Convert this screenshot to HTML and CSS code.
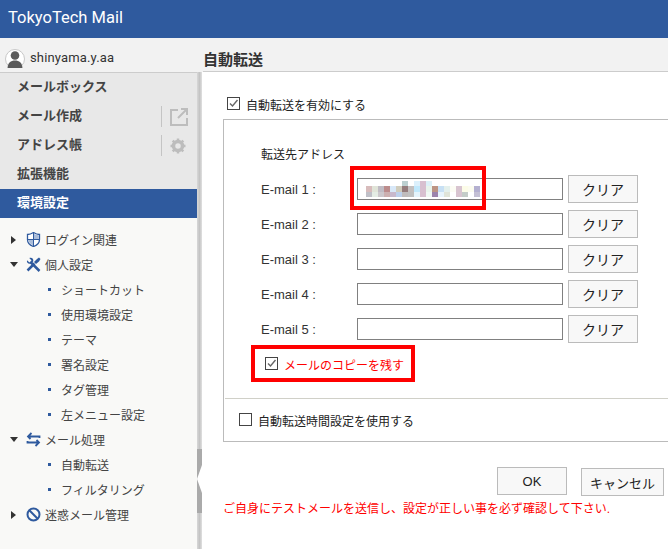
FILE: index.html
```html
<!DOCTYPE html>
<html lang="ja">
<head>
<meta charset="utf-8">
<title>TokyoTech Mail</title>
<link rel="stylesheet" href="styles.css">
</head>
<body>
<header class="header">TokyoTech Mail</header>
<div class="subbar">
  <div class="user">
    <svg class="avatar" width="20" height="20" viewBox="0 0 20 20"><defs><clipPath id="av"><rect x="0" y="0" width="20" height="19"/></clipPath></defs><g clip-path="url(#av)"><circle cx="10" cy="10" r="9.500" fill="#fff" stroke="#c8c8c8"/><circle cx="10" cy="6.500" r="4.300" fill="#5a5a5a"/><path d="M2.500 20c0-6 3-8.500 7.500-8.500s7.500 2.500 7.500 8.500z" fill="#5a5a5a"/></g></svg>
    <span>shinyama.y.aa</span>
  </div>
  <h1 class="title">自動転送</h1>
</div>
<div class="main">
  <aside class="sidebar">
    <nav class="menu">
      <div class="menu-row">メールボックス</div>
      <div class="menu-row"><span>メール作成</span>
        <span class="menu-action"><svg width="18" height="18" viewBox="0 0 18 18" fill="none" stroke="#bdbdbd" stroke-width="2"><path d="M8 2H1v15h16v-7"/><path d="M8 10l8-8M11 1h6v6" /></svg></span>
      </div>
      <div class="menu-row"><span>アドレス帳</span>
        <span class="menu-action"><svg width="16" height="16" viewBox="0 0 16 16"><circle cx="8" cy="8" r="4.500" fill="none" stroke="#bdbdbd" stroke-width="3.500"/><path d="M8 .5v3M8 12.500v3M.5 8h3M12.500 8h3M2.700 2.700l2 2M11.300 11.300l2 2M13.300 2.700l-2 2M4.700 11.300l-2 2" stroke="#bdbdbd" stroke-width="2.500"/></svg></span>
      </div>
      <div class="menu-row">拡張機能</div>
      <div class="menu-row menu-row-active">環境設定</div>
    </nav>
    <ul class="tree">
      <li class="tree-row"><span class="tw tw-closed"></span><svg class="tree-icon" width="15" height="15" viewBox="0 0 15 15"><path d="M1.500 2.500c2 0 4-.7 6-2 2 1.300 4 2 6 2v5c0 3.500-2.500 5.800-6 7-3.500-1.200-6-3.500-6-7z" fill="#fff" stroke="#2f5a9e" stroke-width="1.300"/><path d="M2.200 7.500h5.300v6c-3-1-5.100-3-5.300-6zM7.500 1.500c1.700 1 3.300 1.500 5.300 1.700v4.300H7.500z" fill="#a9bcd9"/><path d="M7.500 1v13M1.500 7.500h12" stroke="#2f5a9e" stroke-width="1"/></svg>ログイン関連</li>
      <li class="tree-row"><span class="tw tw-open"></span><svg class="tree-icon" width="15" height="15" viewBox="0 0 15 15"><path d="M13.500 14L4.500 5" stroke="#2f5a9e" stroke-width="2.500"/><path d="M1 3.200L3.500 5.500 5.500 3.500 3.300 1C5.500 0 8 1.500 7.200 4.500L5 6.500C2.500 7.500.3 5.500 1 3.200z" fill="#2f5a9e"/><path d="M1.500 13.500L8.500 6.500" stroke="#2f5a9e" stroke-width="2.500"/><path d="M8 5l3-3 2-1.500 1.500 1.500L13 4.500l-3 2.500z" fill="#2f5a9e"/></svg>個人設定</li>
      <li class="tree-row sub"><span class="dot"></span>ショートカット</li>
      <li class="tree-row sub"><span class="dot"></span>使用環境設定</li>
      <li class="tree-row sub"><span class="dot"></span>テーマ</li>
      <li class="tree-row sub"><span class="dot"></span>署名設定</li>
      <li class="tree-row sub"><span class="dot"></span>タグ管理</li>
      <li class="tree-row sub"><span class="dot"></span>左メニュー設定</li>
      <li class="tree-row"><span class="tw tw-open"></span><svg class="tree-icon" width="15" height="15" viewBox="0 0 15 15" fill="none" stroke="#2f5a9e" stroke-width="1.800"><path d="M13.500 6V4.500H2.500M5.500 1L2 4.500 4.500 7"/><path d="M1.500 9v1.500h11M9.500 14l3.500-3.500L10.500 8"/></svg>メール処理</li>
      <li class="tree-row sub"><span class="dot"></span>自動転送</li>
      <li class="tree-row sub"><span class="dot"></span>フィルタリング</li>
      <li class="tree-row"><span class="tw tw-closed"></span><svg class="tree-icon" width="15" height="15" viewBox="0 0 15 15" fill="none" stroke="#2f5a9e" stroke-width="2"><circle cx="7.500" cy="7.500" r="6"/><path d="M3.300 3.300l8.400 8.400"/></svg>迷惑メール管理</li>
    </ul>
  </aside>
  <div class="splitter"><div class="handle"><span class="handle-arrow"></span></div></div>
  <main class="content">
    <label class="check-row enable"><span class="cb"><svg width="11" height="11" viewBox="0 0 11 11"><path d="M2 5.500l2.500 2.500L9.500 2" fill="none" stroke="#666" stroke-width="1.400"/></svg></span>自動転送を有効にする</label>
    <section class="panel">
      <div class="panel-top">
        <div class="addr-title">転送先アドレス</div>
        <div class="addr-grid">
          <span class="addr-label">E-mail 1 :</span>
          <div class="field"><svg class="mosaic" width="114" height="16" viewBox="0 0 114 16" shape-rendering="crispEdges">
            <rect x="36" y="0" width="6" height="5" fill="#bcd0d0"/><rect x="48" y="0" width="6" height="5" fill="#dcf0fc"/><rect x="54" y="0" width="6" height="5" fill="#d8c0d0"/><rect x="60" y="0" width="6" height="5" fill="#dcf0f8"/>
            <rect x="0" y="5" width="6" height="6" fill="#d8bcbc"/><rect x="6" y="5" width="6" height="6" fill="#e0e4d8"/><rect x="12" y="5" width="6" height="6" fill="#c0bcc4"/><rect x="18" y="5" width="6" height="6" fill="#bc8c8c"/><rect x="24" y="5" width="6" height="6" fill="#d8e8f8"/><rect x="30" y="5" width="6" height="6" fill="#d0ccbc"/><rect x="36" y="5" width="6" height="6" fill="#947c7c"/><rect x="42" y="5" width="6" height="6" fill="#c4c0c0"/><rect x="48" y="5" width="6" height="6" fill="#c0e8fc"/><rect x="54" y="5" width="6" height="6" fill="#d8c0d0"/><rect x="60" y="5" width="6" height="6" fill="#e8f4ec"/><rect x="66" y="5" width="6" height="6" fill="#bc9484"/><rect x="72" y="5" width="6" height="6" fill="#c8e0f4"/><rect x="78" y="5" width="6" height="6" fill="#e4f0ec"/><rect x="84" y="5" width="6" height="6" fill="#fcfcf4"/><rect x="90" y="5" width="6" height="6" fill="#d8c4d0"/><rect x="96" y="5" width="6" height="6" fill="#fcfce8"/><rect x="102" y="5" width="6" height="6" fill="#fcfcf0"/><rect x="108" y="5" width="6" height="6" fill="#b4b0d0"/>
            <rect x="0" y="11" width="6" height="5" fill="#c0c0c8"/><rect x="6" y="11" width="6" height="5" fill="#e4ece4"/><rect x="12" y="11" width="6" height="5" fill="#ccc8cc"/><rect x="18" y="11" width="6" height="5" fill="#ccb0b0"/><rect x="24" y="11" width="6" height="5" fill="#c8b8cc"/><rect x="30" y="11" width="6" height="5" fill="#bcd0ec"/><rect x="36" y="11" width="6" height="5" fill="#c0bcbc"/><rect x="42" y="11" width="6" height="5" fill="#c0c0c0"/><rect x="48" y="11" width="6" height="5" fill="#e4f4fc"/><rect x="54" y="11" width="6" height="5" fill="#d8c0d0"/><rect x="60" y="11" width="6" height="5" fill="#f0f8f4"/><rect x="66" y="11" width="6" height="5" fill="#9c84ac"/><rect x="72" y="11" width="6" height="5" fill="#e8f4fc"/><rect x="78" y="11" width="6" height="5" fill="#e0e4d8"/><rect x="90" y="11" width="6" height="5" fill="#d8c4d0"/><rect x="96" y="11" width="6" height="5" fill="#c4ccc8"/><rect x="108" y="11" width="6" height="5" fill="#c4c0d4"/>
          </svg></div>
          <button class="btn btn-clear">クリア</button>
          <span class="addr-label">E-mail 2 :</span><div class="field"></div><button class="btn btn-clear">クリア</button>
          <span class="addr-label">E-mail 3 :</span><div class="field"></div><button class="btn btn-clear">クリア</button>
          <span class="addr-label">E-mail 4 :</span><div class="field"></div><button class="btn btn-clear">クリア</button>
          <span class="addr-label">E-mail 5 :</span><div class="field"></div><button class="btn btn-clear">クリア</button>
          <span class="mark mark-email"></span>
        </div>
        <label class="check-row copy"><span class="cb"><svg width="11" height="11" viewBox="0 0 11 11"><path d="M2 5.500l2.500 2.500L9.500 2" fill="none" stroke="#666" stroke-width="1.400"/></svg></span>メールのコピーを残す<span class="mark mark-copy"></span></label>
      </div>
      <div class="panel-bottom">
        <label class="check-row"><span class="cb"></span>自動転送時間設定を使用する</label>
      </div>
    </section>
    <div class="actions">
      <button class="btn btn-ok">OK</button>
      <button class="btn btn-cancel">キャンセル</button>
    </div>
    <p class="notice">ご自身にテストメールを送信し、設定が正しい事を必ず確認して下さい.</p>
  </main>
</div>
</body>
</html>
```

FILE: styles.css
```css
* { box-sizing: border-box; }
html, body { margin: 0; height: 100%; overflow: hidden; }
body {
  width: 668px;
  height: 549px;
  display: flex;
  flex-direction: column;
  background: #fff;
  color: #333;
  font-family: "Liberation Sans", "Noto Sans CJK JP", sans-serif;
  font-size: 12px;
}
.header {
  height: 38px;
  flex: none;
  background: #2f5a9e;
  color: #fff;
  font-family: Roboto, "Liberation Sans", sans-serif;
  font-size: 16.5px;
  line-height: 35px;
  padding-left: 8px;
}
.subbar {
  height: 34px;
  flex: none;
  display: flex;
  background: #f2f2f2;
}
.user {
  width: 203px;
  display: flex;
  align-items: flex-start;
  padding: 11px 0 0 5px;
  font-size: 13px;
  color: #333;
  font-family: Roboto, "Liberation Sans", sans-serif;
}
.user span { margin-left: 5px; line-height: 18px; letter-spacing: .15px; }
.avatar { flex: none; }
.title {
  margin: 0;
  flex: 1;
  font-size: 15px;
  font-weight: 700;
  line-height: 44px;
  color: #333;
  border-bottom: 1px solid #ccc;
  height: 34px;
  overflow: hidden;
}
.main { flex: 1; display: flex; min-height: 0; }
.sidebar { width: 197px; flex: none; background: #f9f9f7; }
.menu { background: #e8e8e8; border-top: 1px solid #ccc; height: 146px; }
.menu-row {
  height: 29px;
  display: flex;
  align-items: center;
  padding: 0 0 5px 17px;
  font-size: 13px;
  font-weight: 700;
  color: #444;
}
.menu-row-active { background: #2f5a9e; color: #fff; }
.menu-action {
  margin: 5px 0 0 auto;
  width: 36px;
  height: 21px;
  display: flex;
  align-items: center;
  padding-left: 8px;
  border-left: 1px solid #c4c4c4;
}
.tree { list-style: none; margin: 9px 0 0; padding: 0; }
.tree-row {
  height: 25px;
  display: flex;
  align-items: center;
  color: #444;
  font-size: 12px;
  padding-left: 11px;
}
.tree-row.sub { padding-left: 48px; }
.tw { width: 15px; flex: none; height: 0; border-style: solid; }
.tw-closed { width: 0; margin-right: 10px; border-width: 4px 0 4px 5px; border-color: transparent transparent transparent #333; }
.tw-open { width: 0; margin: 0 8px 0 -1px; border-width: 5px 4px 0; border-color: #333 transparent transparent; }
.tree-icon { flex: none; margin-right: 4px; }
.dot { width: 3px; height: 3px; margin-right: 10px; background: #2f5a9e; flex: none; }
.splitter {
  width: 5px;
  flex: none;
  background: linear-gradient(to right, #d8d8d8, #c4c4c4 50%, #e0e0e0);
  display: flex;
  flex-direction: column;
  padding-top: 377px;
}
.handle {
  height: 64px;
  background: #aaa;
  position: relative;
}
.handle-arrow {
  position: absolute;
  left: 0;
  top: 16px;
  border-style: solid;
  border-width: 14px 5px 14px 0;
  border-color: transparent #fff transparent transparent;
  width: 0;
  height: 0;
}
.content { flex: 1; min-width: 0; padding: 26px 0 0 21px; color: #222; }
.check-row { display: flex; align-items: center; position: relative; line-height: 16px; }
.cb {
  width: 13px;
  height: 13px;
  border: 1px solid #444;
  background: #fff;
  flex: none;
  margin: 0 6px 5px 0;
  display: flex;
}
.enable { padding-left: 4px; height: 16px; margin-bottom: 5px; }
.panel {
  border: 1px solid #bbb;
  border-right: 0;
  height: 323px;
  margin-right: -2px;
}
.panel-top { height: 279px; padding-top: 26px; border-bottom: 1px solid #d0d0c8; margin-left: 1px; }
.addr-title { padding-left: 36px; height: 18px; line-height: 18px; }
.addr-grid {
  display: grid;
  grid-template-columns: 91px 206px 70px;
  grid-auto-rows: 28px;
  row-gap: 7px;
  column-gap: 5px;
  margin-top: 11px;
  margin-left: 36px;
  align-items: center;
  position: relative;
}
.addr-label { font-size: 13px; color: #333; }
.field {
  height: 22px;
  border: 1px solid #808080;
  background: #fff;
  padding: 2px 0 0 8px;
}
.mosaic { display: block; }
.btn {
  font: inherit;
  background: #f8f8f8;
  border: 1px solid #bbb;
  color: #222;
  padding: 0;
  font-size: 13px;
}
.btn-clear { width: 70px; height: 28px; font-size: 14px; }
.mark { position: absolute; border: 4px solid #f00; pointer-events: none; }
.mark-email { top: -9px; left: 89px; width: 136px; height: 44px; }
.copy { color: #f00; margin: 15px 0 0 40px; height: 16px; }
.mark-copy { left: -14px; top: -13px; width: 164px; height: 37px; }
.panel-bottom { padding: 14px 0 0 15px; }
.actions { display: flex; margin-top: 25px; padding-left: 274px; }
.btn-ok { width: 70px; height: 28px; }
.btn-cancel { width: 83px; height: 28px; margin: 1px 0 0 14px; }
.notice { margin: 4px 0 0; color: #f00; font-size: 12px; line-height: 18px; white-space: nowrap; }
```
